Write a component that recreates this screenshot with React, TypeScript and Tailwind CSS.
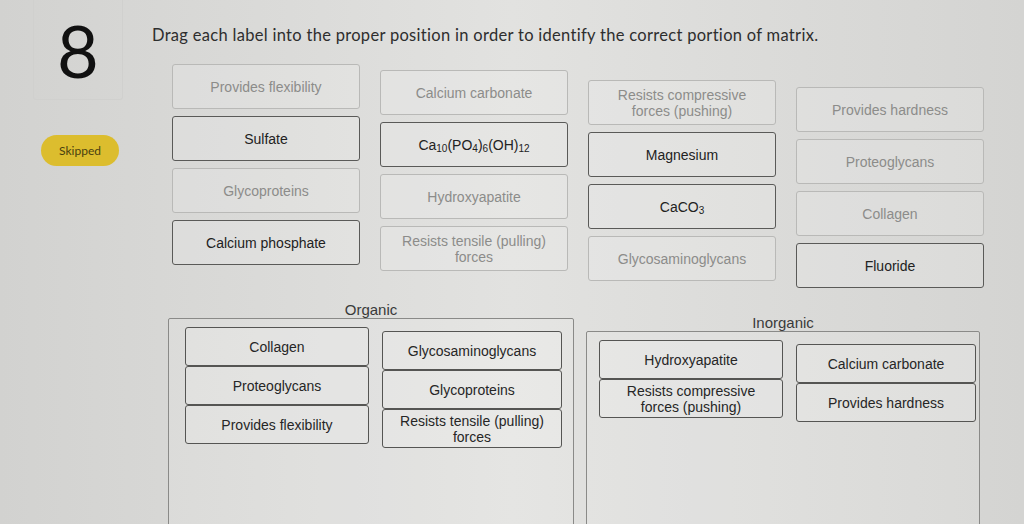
import React from 'react';

type Label = { text: React.ReactNode; used?: boolean };

const columns: { offset: string; items: Label[] }[] = [
  {
    offset: 'mt-0',
    items: [
      { text: 'Provides flexibility', used: true },
      { text: 'Sulfate' },
      { text: 'Glycoproteins', used: true },
      { text: 'Calcium phosphate' },
    ],
  },
  {
    offset: 'mt-[6px]',
    items: [
      { text: 'Calcium carbonate', used: true },
      {
        text: (
          <>
            Ca<sub className="text-[10px]">10</sub>(PO<sub className="text-[10px]">4</sub>)
            <sub className="text-[10px]">6</sub>(OH)<sub className="text-[10px]">12</sub>
          </>
        ),
      },
      { text: 'Hydroxyapatite', used: true },
      { text: 'Resists tensile (pulling) forces', used: true },
    ],
  },
  {
    offset: 'mt-[16px]',
    items: [
      { text: 'Resists compressive forces (pushing)', used: true },
      { text: 'Magnesium' },
      {
        text: (
          <>
            CaCO<sub className="text-[10px]">3</sub>
          </>
        ),
      },
      { text: 'Glycosaminoglycans', used: true },
    ],
  },
  {
    offset: 'mt-[23px]',
    items: [
      { text: 'Provides hardness', used: true },
      { text: 'Proteoglycans', used: true },
      { text: 'Collagen', used: true },
      { text: 'Fluoride' },
    ],
  },
];

function Chip({ label }: { label: Label }) {
  return (
    <div
      className={
        label.used
          ? 'h-[45px] rounded-[3px] border border-[#b9b9b7] bg-white/15 flex items-center justify-center text-center px-4 leading-[16px] text-[#8c8c8a]'
          : 'h-[45px] rounded-[3px] border border-[#5a5a58] bg-white/15 flex items-center justify-center text-center px-4 leading-[16px] text-[#222]'
      }
    >
      <span>{label.text}</span>
    </div>
  );
}

function Placed({ text }: { text: string }) {
  return (
    <div className="h-[39px] rounded-[3px] border border-[#555553] bg-white/15 flex items-center justify-center text-center px-3 leading-[16px] text-[#262626]">
      {text}
    </div>
  );
}

function Zone({
  title,
  width,
  pad,
  left,
  right,
  shift,
}: {
  title: string;
  width: string;
  pad: string;
  left: string[];
  right: string[];
  shift: string;
}) {
  return (
    <div className={`${width} ${shift} flex flex-col`}>
      <div className="text-center text-[15px] text-[#3a3a3a] h-[20px] leading-[20px] mb-[-2px]">{title}</div>
      <div className={`h-[220px] border border-[#8a8a88] rounded-[2px] bg-white/10 ${pad} pt-[8px] flex gap-[13px]`}>
        <div className="w-[184px] flex flex-col">
          {left.map((t) => (
            <Placed key={t} text={t} />
          ))}
        </div>
        <div className="w-[180px] flex flex-col mt-[4px]">
          {right.map((t) => (
            <Placed key={t} text={t} />
          ))}
        </div>
      </div>
    </div>
  );
}

export default function App() {
  return (
    <div
      className="w-[1024px] h-[524px] overflow-hidden flex bg-linear-to-r from-[#d2d2d0] via-[#e2e2e0] to-[#d4d4d2]"
      style={{ fontFamily: '"Liberation Sans", Arial, sans-serif' }}
    >
      <div className="w-[152px] shrink-0 flex flex-col">
        <div className="ml-[33px] w-[90px] h-[100px] border border-[#d0d0ce] border-t-0 rounded-b-[3px] flex items-center justify-center">
          <span className="text-[72px] text-[#111] leading-none" style={{ fontFamily: 'Lato, sans-serif' }}>
            8
          </span>
        </div>
        <div className="ml-[41px] mt-[35px] w-[78px] h-[31px] rounded-full bg-[#dcbd2e] flex items-center justify-center text-[12px] text-[#4a3f10]" style={{ fontFamily: 'Lato, sans-serif' }}>
          Skipped
        </div>
      </div>

      <div className="flex-1 flex flex-col">
        <h1
          className="mt-[25px] text-[16.5px] text-[#2e2e2e] leading-[20px] tracking-[0.3px]"
          style={{ fontFamily: 'Lato, sans-serif' }}
        >
          Drag each label into the proper position in order to identify the correct portion of matrix.
        </h1>

        <div className="ml-[20px] mt-[19px] flex gap-[20px] text-[14px]">
          {columns.map((col, i) => (
            <div key={i} className={`w-[188px] flex flex-col gap-[7px] ${col.offset}`}>
              {col.items.map((item, j) => (
                <Chip key={j} label={item} />
              ))}
            </div>
          ))}
        </div>

        <div className="ml-[16px] mt-[12px] flex gap-[12px] text-[14px]">
          <Zone
            title="Organic"
            width="w-[406px]"
            pad="pl-[16px]"
            shift="mt-0"
            left={['Collagen', 'Proteoglycans', 'Provides flexibility']}
            right={['Glycosaminoglycans', 'Glycoproteins', 'Resists tensile (pulling) forces']}
          />
          <Zone
            title="Inorganic"
            width="w-[394px]"
            pad="pl-[12px]"
            shift="mt-[13px]"
            left={['Hydroxyapatite', 'Resists compressive forces (pushing)']}
            right={['Calcium carbonate', 'Provides hardness']}
          />
        </div>
      </div>
    </div>
  );
}
